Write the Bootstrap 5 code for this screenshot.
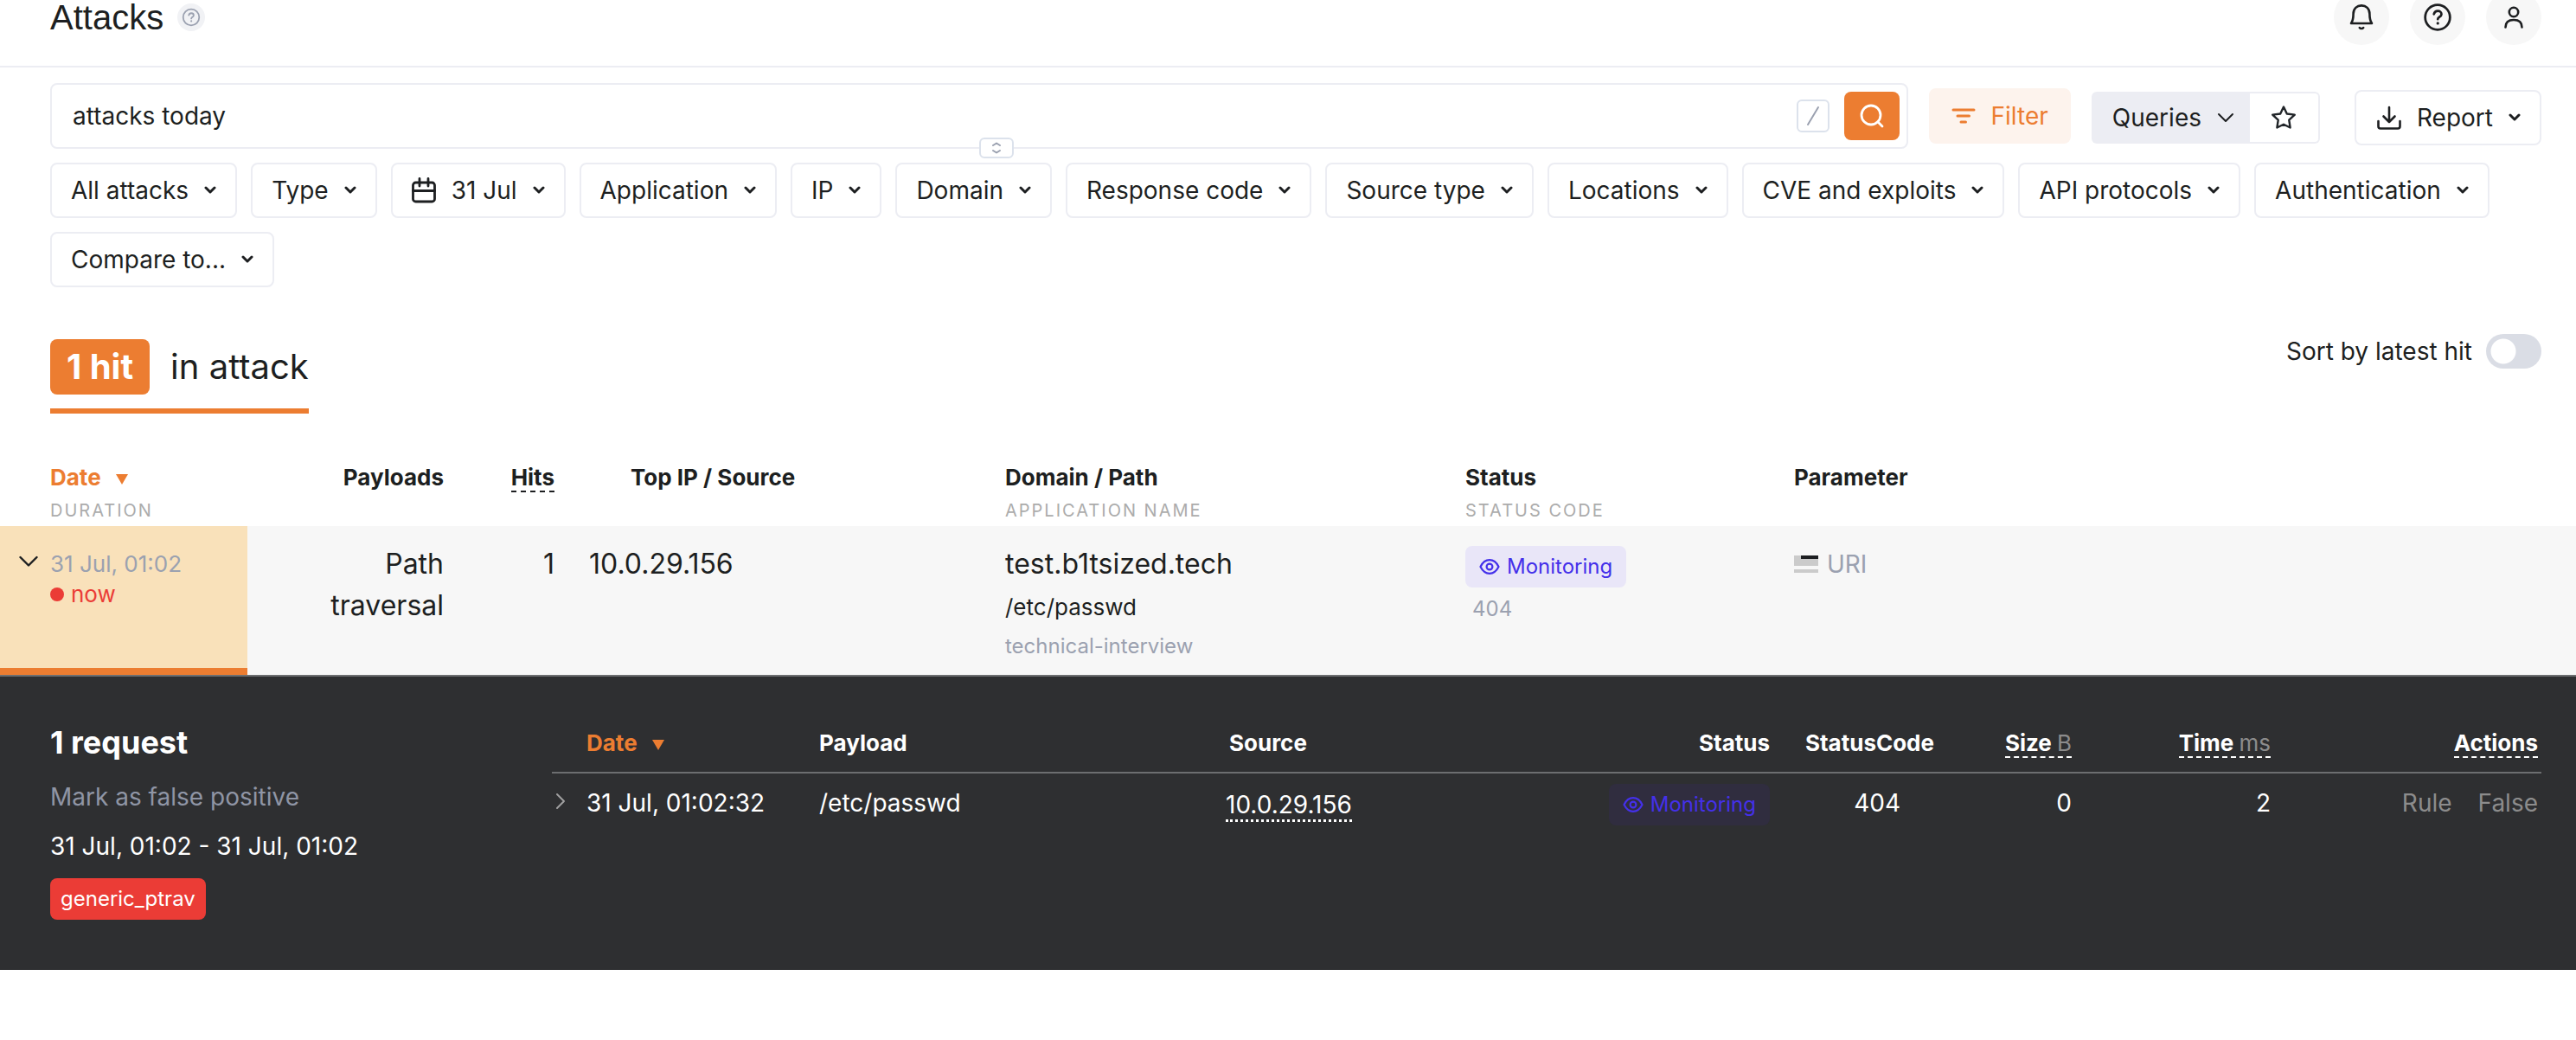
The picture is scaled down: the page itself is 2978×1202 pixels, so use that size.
<!DOCTYPE html>
<html lang="en">
<head>
<meta charset="utf-8">
<meta name="viewport" content="width=device-width, initial-scale=1">
<title>Attacks</title>
<link href="https://cdn.jsdelivr.net/npm/bootstrap@5.3.0/dist/css/bootstrap.min.css" rel="stylesheet">
<style>
  :root { --ink:#1d1f21; --line:#ecedf3; --accent:#ec7d31; --muted:#9ba1b0; --dark:#2e2f31; }
  body { font-family: Inter, "Liberation Sans", sans-serif; font-size: 28px; line-height: 40px; color: var(--ink); background: #fff; }
  svg { display: block; flex: none; fill: none; stroke: currentColor; stroke-linecap: round; stroke-linejoin: round; }
  .page-x { padding-left: 58px; padding-right: 40px; }

  /* The header is partly scrolled out of view */
  .page-header { height: 114px; margin-top: -36px; border-bottom: 2px solid var(--line); }
  .page-title { font-family: "Liberation Sans", sans-serif; font-size: 40px; font-weight: 400; line-height: 48px; }
  .help-dot { width: 32px; height: 32px; background: #f1f2f5; color: var(--muted); }
  .round-btn { width: 64px; height: 64px; background: #f7f7f7; color: var(--ink); }
  .header-gap { gap: 24px; }

  .toolbar { gap: 24px; margin-top: 18px; }
  .tool-group { gap: 40px; }
  .search-box { height: 76px; border: 2px solid var(--line); border-radius: 8px; padding: 0 8px 0 24px; }
  .search-box input { height: 60px; border: 0; outline: 0; background: transparent; color: inherit; }
  .slash-key { width: 38px; height: 38px; border: 2px solid #dce2ec; border-radius: 6px; color: var(--muted); margin-right: 17px; }
  .search-go { width: 64px; height: 56px; border-radius: 8px; background: var(--accent); color: #fff; }
  .resizer { left: 50%; bottom: -13px; width: 40px; height: 24px; border: 2px solid #dce2ec; border-radius: 6px; background: #fff; color: var(--muted); }
  .tool-btn { height: 64px; padding: 0 22px; border: 2px solid var(--line); border-radius: 8px; background: #fff; color: var(--ink); font-size: 28px; line-height: 40px; }
  .filter-btn { padding: 0 24px; background: #fdf3ed; border-color: #fdf3ed; color: var(--accent); }
  .report-btn { padding-left: 24px; }
  .split-left { height: 60px; background: #ecedf3; border-radius: 6px 0 0 6px; padding: 0 18px 0 24px; }
  .split-right { width: 81px; height: 60px; border: 2px solid var(--line); border-left: 0; border-radius: 0 6px 6px 0; background: #fff; }
  .chips { gap: 16px; margin-top: 16px; }
  .gap-chev { gap: 18px; }

  .summary { margin-top: 54px; }
  .summary-tab { font-size: 40px; line-height: 64px; border-bottom: 6px solid var(--accent); padding-bottom: 16px; margin-top: 6px; gap: 24px; }
  .hit-count { background: var(--accent); color: #fff; border-radius: 8px; padding: 0 19px; font-weight: 700; }
  .sort-switch { width: 64px; height: 40px; margin: 0; border: 0; appearance: none; border-radius: 20px; background: radial-gradient(circle at 20px 20px, #fff 14px, #dadde5 15px); }

  .data-table { table-layout: fixed; width: 100%; border-collapse: separate; border-spacing: 0; }
  .data-table th, .data-table td { padding: 0; vertical-align: top; }
  .attacks-table { margin-top: 54px; }
  .attacks-table th { font-size: 26px; line-height: 40px; height: 76px; font-weight: 700; }
  .attacks-table th.date-head { padding-left: 58px; }
  .attacks-table th.ip-head { padding-left: 88px; }
  .sub-head { display: block; font-size: 20px; line-height: 36px; font-weight: 400; letter-spacing: 2px; color: #acacac; }
  .dashed { border-bottom: 2px dashed currentColor; }
  .dotted-line { border-bottom: 3px dotted currentColor; }
  .text-accent { color: var(--accent); }
  .attack-row td { background: #f7f7f7; height: 172px; padding-top: 20px; font-size: 32px; line-height: 48px; }
  .attack-row .date-cell { background: #f9e1ba; border-bottom: 8px solid var(--accent); padding: 26px 0 0 22px; font-size: 26px; line-height: 35px; }
  .attack-row .ip-cell { padding-left: 40px; }
  .attack-row .status-cell { padding-top: 23px; }
  .date-gap { gap: 14px; }
  .muted { color: var(--muted); }
  .now { color: #eb3c36; gap: 8px; }
  .live-dot { width: 16px; height: 16px; background: #eb3c36; }
  .path-text { font-size: 26px; line-height: 52px; }
  .app-text { font-size: 24px; line-height: 38px; }
  .code-text { font-size: 24px; line-height: 50px; padding-left: 8px; }
  .param-text { font-size: 28px; gap: 10px; }
  .monitor { width: fit-content; gap: 8px; height: 48px; padding: 0 16px; border-radius: 8px; background: #e9e6f8; color: #4430ea; font-size: 24px; line-height: 48px; }
  .no-line { stroke: none; }

  .detail { background: var(--dark); color: #fff; border-top: 2px solid #6c6e70; padding-top: 50px; padding-bottom: 58px; }
  .detail-side { width: 580px; flex: none; gap: 17px; }
  .detail h2 { font-size: 36px; line-height: 52px; font-weight: 700; margin: 0; }
  .detail-link { color: #8f95a5; text-decoration: none; }
  .rule-tag { background: #eb3c36; border-radius: 8px; padding: 0 12px; height: 48px; font-size: 24px; line-height: 48px; }
  .requests-table th { font-size: 26px; line-height: 30px; height: 62px; padding-top: 12px; font-weight: 700; border-bottom: 2px solid #6c6e70; }
  .requests-table td { padding-top: 14px; }
  .requests-table td.code-cell { padding-right: 39px; }
  .requests-table td.badge-cell { padding-top: 12px; }
  .requests-table .monitor { background: #302d3f; }
  .row-arrow { color: #a0a0a0; }
  .action-gap { gap: 30px; }
  .unit { color: #8c8c8c; font-weight: 400; }
  .dim { color: #8c8c8c; text-decoration: none; }
</style>
</head>
<body>
<svg width="0" height="0" class="position-absolute" aria-hidden="true">
  <symbol id="chev" viewBox="0 0 14 10"><path d="M2 2l5 5 5-5" stroke-width="3"/></symbol>
  <symbol id="eye" viewBox="0 0 24 20"><path d="M1.500 10C4 5 7.500 2.200 12 2.200S20 5 22.500 10C20 15 16.500 17.800 12 17.800S4 15 1.500 10z" stroke-width="2.200"/><circle cx="12" cy="10" r="3.400" stroke-width="2.200"/></symbol>
  <symbol id="quest" viewBox="0 0 32 32"><circle cx="16" cy="16" r="13.500" stroke-width="2.600"/><path d="M12 12.500c.5-2.200 2.200-3.400 4.200-3.400 2.300 0 4 1.400 4 3.500 0 2.800-4 3.200-4 5.400" stroke-width="2.600"/><path d="M16.200 22.400v.1" stroke-width="3"/></symbol>
</svg>

<header class="page-header page-x d-flex align-items-center justify-content-between">
  <div class="d-flex align-items-center gap-3">
    <h1 class="page-title m-0">Attacks</h1>
    <button class="help-dot btn p-0 border-0 rounded-circle d-flex align-items-center justify-content-center" aria-label="About attacks"><svg width="22" height="22"><use href="#quest"/></svg></button>
  </div>
  <div class="d-flex header-gap">
    <button class="round-btn btn p-0 border-0 rounded-circle d-flex align-items-center justify-content-center" aria-label="Notifications"><svg width="32" height="32" viewBox="0 0 32 32" stroke-width="2.600"><path d="M4 23h24c-1.600-2.200-2.600-4.500-2.600-11C25.400 5.800 21.200 2.400 16 2.400S6.600 5.800 6.600 12c0 6.500-1 8.800-2.600 11z"/><path d="M13.800 28c1 1.400 3.400 1.400 4.400 0"/></svg></button>
    <button class="round-btn btn p-0 border-0 rounded-circle d-flex align-items-center justify-content-center" aria-label="Help"><svg width="34" height="34"><use href="#quest"/></svg></button>
    <button class="round-btn btn p-0 border-0 rounded-circle d-flex align-items-center justify-content-center" aria-label="Account"><svg width="32" height="32" viewBox="0 0 32 32" stroke-width="2.600"><circle cx="16" cy="10" r="5.200"/><path d="M6.500 27.500c0-6 4-8.500 9.500-8.500s9.500 2.500 9.500 8.500"/></svg></button>
  </div>
</header>

<main>
  <section class="page-x">
    <div class="toolbar d-flex align-items-center">
      <div class="search-box position-relative d-flex align-items-center flex-grow-1">
        <input class="flex-grow-1 p-0" type="text" value="attacks today" aria-label="Search attacks">
        <span class="slash-key d-flex align-items-center justify-content-center"><svg width="16" height="24" viewBox="0 0 16 24" stroke-width="2"><path d="M14 2L2 22"/></svg></span>
        <button class="search-go btn p-0 border-0 d-flex align-items-center justify-content-center" aria-label="Search"><svg width="28" height="28" viewBox="0 0 28 28" stroke-width="2.800"><circle cx="13" cy="13" r="11"/><path d="M20.800 20.800L26 26"/></svg></button>
        <button class="resizer position-absolute p-0 d-flex align-items-center justify-content-center" aria-label="Resize search"><svg width="12" height="14" viewBox="0 0 12 14" stroke-width="2"><path d="M2 4l4-2.500L10 4M2 10l4 2.500 4-2.500"/></svg></button>
      </div>
      <button class="tool-btn filter-btn btn d-flex align-items-center gap-chev"><svg width="28" height="20" viewBox="0 0 28 20" stroke-width="3"><path d="M2 3h24M7 10h13.500M11 17h5.500"/></svg>Filter</button>
      <div class="tool-group d-flex align-items-center pt-1">
        <div class="d-flex align-items-center">
          <button class="tool-btn split-left btn border-0 d-flex align-items-center gap-chev">Queries<svg width="20" height="12" viewBox="0 0 20 12" stroke-width="2"><path d="M2 2l8 8 8-8"/></svg></button>
          <button class="split-right btn p-0 d-flex align-items-center justify-content-center" aria-label="Save query"><svg width="32" height="32" viewBox="0 0 32 32" stroke-width="2.400"><path d="M16 3.500l3.800 8 9 1.100-6.500 6.100 1.300 8.800-7.600-3.800-7.600 3.800 1.300-8.800-6.500-6.100 9-1.100z"/></svg></button>
        </div>
        <button class="tool-btn report-btn btn d-flex align-items-center gap-chev"><svg width="28" height="28" viewBox="0 0 28 28" stroke-width="2.600"><path d="M14 2v17M7.500 12.500l6.500 6.500 6.500-6.500M1.500 18v6a2.500 2.500 0 002.500 2.500h20a2.500 2.500 0 002.500-2.500v-6"/></svg>Report<svg width="14" height="10"><use href="#chev"/></svg></button>
      </div>
    </div>

    <div class="chips d-flex flex-wrap">
      <button class="tool-btn btn d-flex align-items-center gap-chev">All attacks<svg width="14" height="10"><use href="#chev"/></svg></button>
      <button class="tool-btn btn d-flex align-items-center gap-chev">Type<svg width="14" height="10"><use href="#chev"/></svg></button>
      <button class="tool-btn btn d-flex align-items-center gap-chev"><svg width="28" height="30" viewBox="0 0 28 30" stroke-width="2.800"><rect x="1.500" y="6" width="25" height="22" rx="3"/><path d="M1.500 15.500h25M9 1.500V10M19 1.500V10"/></svg>31 Jul<svg width="14" height="10"><use href="#chev"/></svg></button>
      <button class="tool-btn btn d-flex align-items-center gap-chev">Application<svg width="14" height="10"><use href="#chev"/></svg></button>
      <button class="tool-btn btn d-flex align-items-center gap-chev">IP<svg width="14" height="10"><use href="#chev"/></svg></button>
      <button class="tool-btn btn d-flex align-items-center gap-chev">Domain<svg width="14" height="10"><use href="#chev"/></svg></button>
      <button class="tool-btn btn d-flex align-items-center gap-chev">Response code<svg width="14" height="10"><use href="#chev"/></svg></button>
      <button class="tool-btn btn d-flex align-items-center gap-chev">Source type<svg width="14" height="10"><use href="#chev"/></svg></button>
      <button class="tool-btn btn d-flex align-items-center gap-chev">Locations<svg width="14" height="10"><use href="#chev"/></svg></button>
      <button class="tool-btn btn d-flex align-items-center gap-chev">CVE and exploits<svg width="14" height="10"><use href="#chev"/></svg></button>
      <button class="tool-btn btn d-flex align-items-center gap-chev">API protocols<svg width="14" height="10"><use href="#chev"/></svg></button>
      <button class="tool-btn btn d-flex align-items-center gap-chev">Authentication<svg width="14" height="10"><use href="#chev"/></svg></button>
      <button class="tool-btn btn d-flex align-items-center gap-chev">Compare to...<svg width="14" height="10"><use href="#chev"/></svg></button>
    </div>

    <div class="summary d-flex justify-content-between align-items-start">
      <div class="summary-tab d-flex"><span class="hit-count">1 hit</span><span>in attack</span></div>
      <div class="d-flex align-items-center gap-3">
        <label for="sortLatest">Sort by latest hit</label>
        <input class="sort-switch" type="checkbox" role="switch" id="sortLatest">
      </div>
    </div>
  </section>

  <table class="data-table attacks-table">
    <colgroup><col style="width:286px"><col style="width:227px"><col style="width:128px"><col style="width:521px"><col style="width:532px"><col style="width:380px"><col></colgroup>
    <thead>
      <tr>
        <th class="date-head text-accent"><span class="d-flex align-items-center gap-3">Date<svg class="mt-1" width="16" height="14" viewBox="0 0 16 14"><path d="M1 1h14L8 13z" fill="currentColor" stroke="none"/></svg></span><span class="sub-head">DURATION</span></th>
        <th class="text-end">Payloads</th>
        <th class="text-end"><span class="dashed">Hits</span></th>
        <th class="ip-head">Top IP / Source</th>
        <th>Domain / Path<span class="sub-head">APPLICATION NAME</span></th>
        <th>Status<span class="sub-head">STATUS CODE</span></th>
        <th>Parameter</th>
      </tr>
    </thead>
    <tbody>
      <tr class="attack-row">
        <td class="date-cell">
          <div class="d-flex date-gap">
            <svg class="mt-2" width="22" height="14" viewBox="0 0 22 14" stroke-width="2.400"><path d="M1.500 2l9.500 9.500L20.500 2"/></svg>
            <div><div class="muted">31 Jul, 01:02</div><div class="now d-flex align-items-center"><span class="live-dot rounded-circle"></span>now</div></div>
          </div>
        </td>
        <td class="text-end">Path<br>traversal</td>
        <td class="text-end">1</td>
        <td class="ip-cell">10.0.29.156</td>
        <td>test.b1tsized.tech<div class="path-text">/etc/passwd</div><div class="app-text muted">technical-interview</div></td>
        <td class="status-cell"><div class="monitor d-flex align-items-center"><svg width="24" height="20"><use href="#eye"/></svg>Monitoring</div><div class="code-text muted">404</div></td>
        <td><div class="param-text muted d-flex align-items-center"><svg class="no-line" width="28" height="20" viewBox="0 0 28 20"><path d="M0 0h28v12H0zM0 16h28v4H0z" fill="#cbcbcb"/><path d="M8 0h20v4H8z" fill="#1d1f21"/></svg>URI</div></td>
      </tr>
    </tbody>
  </table>

  <section class="detail page-x d-flex align-items-start">
    <div class="detail-side d-flex flex-column align-items-start">
      <h2>1 request</h2>
      <a class="detail-link" href="#">Mark as false positive</a>
      <div>31 Jul, 01:02 - 31 Jul, 01:02</div>
      <span class="rule-tag">generic_ptrav</span>
    </div>
    <table class="data-table requests-table">
      <colgroup><col style="width:40px"><col style="width:269px"><col style="width:470px"><col><col style="width:190px"><col style="width:159px"><col style="width:230px"><col style="width:313px"></colgroup>
      <thead>
        <tr>
          <th></th>
          <th class="text-accent"><span class="d-flex align-items-center gap-3">Date<svg class="mt-1" width="16" height="14" viewBox="0 0 16 14"><path d="M1 1h14L8 13z" fill="currentColor" stroke="none"/></svg></span></th>
          <th>Payload</th>
          <th><span class="d-flex justify-content-between ps-1"><span>Source</span><span>Status</span></span></th>
          <th class="text-end">StatusCode</th>
          <th class="text-end"><span class="dashed">Size <span class="unit">B</span></span></th>
          <th class="text-end"><span class="dashed">Time <span class="unit">ms</span></span></th>
          <th class="text-end pe-1"><span class="dashed">Actions</span></th>
        </tr>
      </thead>
      <tbody>
        <tr>
          <td><svg class="row-arrow mt-2 ms-1" width="12" height="20" viewBox="0 0 12 20" stroke-width="2"><path d="M2 2l8 8-8 8"/></svg></td>
          <td>31 Jul, 01:02:32</td>
          <td>/etc/passwd</td>
          <td class="badge-cell"><div class="d-flex justify-content-between align-items-start"><span class="pt-1"><span class="dotted-line">10.0.29.156</span></span><span class="monitor d-flex align-items-center"><svg width="24" height="20"><use href="#eye"/></svg>Monitoring</span></div></td>
          <td class="code-cell text-end">404</td>
          <td class="text-end">0</td>
          <td class="text-end">2</td>
          <td class="pe-1"><div class="action-gap d-flex justify-content-end"><a class="dim" href="#">Rule</a><a class="dim" href="#">False</a></div></td>
        </tr>
      </tbody>
    </table>
  </section>
</main>
<script src="https://cdn.jsdelivr.net/npm/bootstrap@5.3.0/dist/js/bootstrap.bundle.min.js"></script>
</body>
</html>
